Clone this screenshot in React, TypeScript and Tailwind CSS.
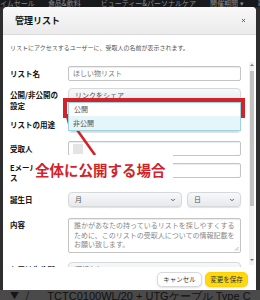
import { ChevronDown, X } from 'lucide-react';
import type { ReactNode } from 'react';

const Label = ({ children, className = '' }: { children: ReactNode; className?: string }) => (
  <div className={`w-[58px] shrink-0 pr-[4px] text-[7.5px] font-bold text-[#111] ${className}`}>{children}</div>
);

const Input = ({ children, className = '' }: { children?: ReactNode; className?: string }) => (
  <div
    className={`w-[173px] h-[15px] flex items-center border border-[#c4c4c4] rounded-[2px] bg-white pl-[4px] text-[7px] text-[#777] shadow-[inset_0_1px_1px_rgba(0,0,0,0.08)] ${className}`}
  >
    {children}
  </div>
);

const Select = ({ value, className = '' }: { value: string; className?: string }) => (
  <div
    className={`h-[15px] flex items-center justify-between rounded-[4px] border border-[#d5d9d9] bg-gradient-to-b from-[#f7f8fa] to-[#e7e9ec] pl-[6px] pr-[5px] text-[7px] text-[#555] shadow-[0_1px_1px_rgba(0,0,0,0.12)] ${className}`}
  >
    <span>{value}</span>
    <ChevronDown size={6} strokeWidth={3.5} className="text-[#444]" />
  </div>
);

const App = () => {
  return (
    <div className="relative w-[260px] h-[300px] overflow-hidden bg-[#2e2e2e] font-['Noto_Sans_CJK_JP',sans-serif]">
      {/* top nav behind overlay */}
      <div className="h-[7px] bg-[#17191c] flex items-start overflow-hidden whitespace-nowrap text-[7px] leading-[6px] text-[#8a8a8a]">
        <span className="-ml-[7px]">タイムセール</span>
        <span className="ml-[13px]">食品&amp;飲料</span>
        <span className="ml-[20px]">ビューティー&amp;パーソナルケア</span>
        <span className="ml-[14px]">開催期間 ▾</span>
        <span className="ml-[14px]">車</span>
      </div>

      {/* modal */}
      <div className="ml-[3px] w-[253px] h-[283px] bg-white rounded-t-[4px] flex flex-col overflow-hidden">
        <div className="h-[28px] shrink-0 flex items-center justify-between pl-[12px] pr-[10px] bg-gradient-to-b from-[#f8f8f8] to-[#ebebeb] border-b border-[#dadada] rounded-t-[4px]">
          <span className="text-[9px] font-bold text-[#111]">管理リスト</span>
          <X size={5} strokeWidth={4} className="text-[#555]" />
        </div>

        <div className="h-[25px] shrink-0 flex items-center pl-[7px] text-[6px] text-[#555]">
          リストにアクセスするユーザーに、受取人の名前が表示されます。
        </div>

        <div className="relative h-[207px] shrink-0 overflow-hidden pl-[7px]">
          <div className="flex flex-col">
            <div className="mt-[6px] flex items-center">
              <Label>リスト名</Label>
              <Input>ほしい物リスト</Input>
            </div>

            <div className="mt-[7px] flex items-start">
              <Label className="pt-[1px] leading-[11px]">公開/非公開の設定</Label>
              <div className="relative w-[173px]">
                <Select value="リンクをシェア" className="h-[14px] rounded-[3px] [&>svg]:hidden" />
                <div className="absolute left-0 top-[14px] w-[173px] h-[29px] z-10 flex flex-col border border-[#9fd3e0] bg-white text-[7px] text-[#555]">
                  <div className="h-[13px] flex items-center pl-[5px]">公開</div>
                  <div className="flex-1 flex items-center pl-[4px] bg-[#e5f6fb]">非公開</div>
                </div>
              </div>
            </div>

            <div className="mt-[6px] flex items-center">
              <Label>リストの用途</Label>
              <Select value="" className="w-[173px] h-[14px]" />
            </div>

            <div className="mt-[9px] flex items-center">
              <Label>受取人</Label>
              <Input className="pl-[2px]">
                <div className="w-[10px] h-[10px] bg-[#e4e4e4]" />
              </Input>
            </div>

            <div className="mt-[7px] flex items-start">
              <Label className="leading-[10px]">Eメールアドレス</Label>
              <Input />
            </div>

            <div className="mt-[9px] flex items-center">
              <Label>誕生日</Label>
              <div className="w-[173px] flex gap-[5px]">
                <Select value="月" className="w-[114px]" />
                <Select value="日" className="w-[54px]" />
              </div>
            </div>

            <div className="mt-[11px] flex items-start">
              <Label className="pt-[2px] leading-[10px]">内容</Label>
              <div className="relative w-[173px] h-[35px] border border-[#c4c4c4] rounded-[2px] pl-[5px] pt-[2px] text-[7px] leading-[9.5px] text-[#888] shadow-[inset_0_1px_1px_rgba(0,0,0,0.08)]">
                誰かがあなたの持っているリストを探しやすくするために、このリストの受取人についての情報記載をお願い致します。
                <svg className="absolute right-[1px] bottom-[1px]" width="5" height="5" viewBox="0 0 5 5">
                  <path d="M4.5 1 L1 4.5 M4.5 3 L3 4.5" stroke="#999" strokeWidth="0.7" />
                </svg>
              </div>
            </div>

            <div className="mt-[9px] flex items-center">
              <Label>お届け先住所</Label>
              <Select value="選択なし" className="w-[173px] [&>svg]:hidden" />
            </div>
          </div>

          {/* scrollbar */}
          <div className="absolute right-[2px] top-[2px] bottom-[2px] w-[5px] bg-[#f1f1f1] flex flex-col items-center">
            <div className="mt-[2px] w-0 h-0 border-x-[2px] border-x-transparent border-b-[2px] border-b-[#777]" />
            <div className="mt-[5px] w-[4px] h-[135px] bg-[#c1c1c1]" />
            <div className="mt-auto mb-[4px] w-0 h-0 border-x-[2px] border-x-transparent border-t-[2px] border-t-[#777]" />
          </div>
        </div>

        <div className="h-[23px] shrink-0 flex items-start justify-end gap-[3px] pt-[5px] pr-[8px]">
          <div className="w-[45px] h-[15px] flex items-center justify-center rounded-[5px] border border-[#d5d9d9] bg-white text-[6.5px] text-[#333] shadow-[0_1px_2px_rgba(0,0,0,0.12)]">
            キャンセル
          </div>
          <div className="w-[43px] h-[15px] flex items-center justify-center rounded-[5px] border border-[#fcd200] bg-[#ffd814] text-[6.5px] text-[#333] shadow-[0_1px_2px_rgba(0,0,0,0.12)]">
            変更を保存
          </div>
        </div>
      </div>

      {/* page below overlay */}
      <div className="h-[10px] bg-[#4a4a4a] flex items-start overflow-hidden whitespace-nowrap">
        <span className="ml-[10px] mt-[1px] text-[9px] leading-[9px] text-[#161616]">▼</span>
        <span className="ml-[6px] text-[11px] leading-[11px] text-[#161616]">/</span>
        <span className="ml-[18px] mt-[1px] font-['Liberation_Sans',sans-serif] text-[11px] leading-[11px] text-[#111]">
          TCTC0100WL/20 + UTGケーブル Type C
        </span>
      </div>

      {/* annotations */}
      <svg className="absolute left-0 top-0 pointer-events-none" width="260" height="300" viewBox="0 0 260 300">
        <line x1="95" y1="155" x2="72.5" y2="123.5" stroke="#d2232a" strokeWidth="2.6" />
        <polygon points="65,113 77,120.5 68.5,126.5" fill="#d2232a" />
      </svg>
      <div className="absolute left-[63px] top-[98px] w-[182px] h-[20px] border-[4px] border-[#d2232a]" />
      <div className="absolute left-[33px] top-[155px] w-[140px] h-[30px] bg-white flex items-center pl-[2px]">
        <span className="text-[14.5px] font-bold leading-none text-[#d2232a]">全体に公開する場合</span>
      </div>
    </div>
  );
};

export default App;
